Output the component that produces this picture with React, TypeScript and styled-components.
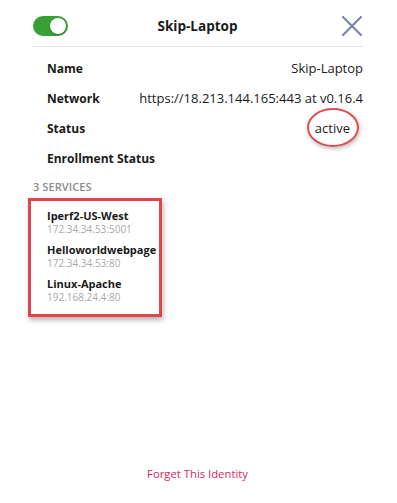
import styled, { createGlobalStyle } from 'styled-components';

const GlobalStyle = createGlobalStyle`
  html, body {
    margin: 0;
    padding: 0;
    background: #ffffff;
  }
  body {
    font-family: "Open Sans", "Noto Sans", sans-serif;
    color: #1d1d1d;
  }
`;

type Service = { name: string; address: string };

const services: Service[] = [
  { name: 'Iperf2-US-West', address: '172.34.34.53:5001' },
  { name: 'Helloworldwebpage', address: '172.34.34.53:80' },
  { name: 'Linux-Apache', address: '192.168.24.4:80' },
];

const Page = styled.div`
  width: 397px;
  height: 503px;
  box-sizing: border-box;
  padding: 0 34px 0 32px;
  display: flex;
  flex-direction: column;
`;

const Header = styled.div`
  height: 47px;
  display: flex;
  align-items: center;
  border-bottom: 1px solid #dfe4ea;
  padding-top: 6px;
  box-sizing: border-box;
`;

const HeaderSide = styled.div<{ end?: boolean }>`
  width: 38px;
  display: flex;
  justify-content: ${({ end }) => (end ? 'flex-end' : 'flex-start')};
`;

const Toggle = styled.div<{ on?: boolean }>`
  width: 35px;
  height: 20px;
  border-radius: 10px;
  background: ${({ on }) => (on ? '#36a035' : '#c8c8c8')};
  position: relative;
  margin-left: 1px;
  &::after {
    content: '';
    position: absolute;
    top: 2px;
    left: ${({ on }) => (on ? '17px' : '2px')};
    width: 16px;
    height: 16px;
    border-radius: 50%;
    background: #ffffff;
    box-shadow: 0 1px 2px rgba(0, 0, 0, 0.25);
  }
`;

const Title = styled.div`
  flex: 1;
  text-align: center;
  font-size: 13.5px;
  font-weight: 700;
  color: #1a1a1a;
`;

const CloseButton = styled.div`
  width: 22px;
  height: 22px;
  display: flex;
  align-items: center;
  justify-content: center;
`;

const Rows = styled.div`
  display: flex;
  flex-direction: column;
  padding: 6px 0 0 15px;
`;

const Row = styled.div`
  height: 30px;
  display: flex;
  align-items: center;
  justify-content: space-between;
`;

const Label = styled.div`
  font-size: 12px;
  font-weight: 700;
  color: #1a1a1a;
`;

const Value = styled.div<{ inset?: number }>`
  font-size: 13px;
  color: #1a1a1a;
  position: relative;
  margin-right: ${({ inset }) => inset ?? 0}px;
`;

const Circle = styled.div`
  position: absolute;
  left: -8px;
  top: -11px;
  width: 48px;
  height: 35px;
  border: 2.5px solid #e04c4f;
  border-radius: 50%;
  box-shadow: 1px 2px 4px rgba(0, 0, 0, 0.25);
`;

const SectionTitle = styled.div`
  margin-top: 6px;
  font-size: 11px;
  font-weight: 600;
  color: #8c8c8c;
  text-transform: uppercase;
  letter-spacing: 0.1px;
  margin-left: 1px;
`;

const ServiceBox = styled.div`
  margin-top: 4px;
  margin-left: -4px;
  width: 134px;
  box-sizing: border-box;
  border: 3px solid #e1454c;
  box-shadow: 1px 3px 5px rgba(0, 0, 0, 0.3);
  padding: 4px 0 7px 16px;
  display: flex;
  flex-direction: column;
`;

const ServiceItem = styled.div`
  height: 34px;
  display: flex;
  flex-direction: column;
  justify-content: center;
`;

const ServiceName = styled.div`
  font-size: 11px;
  font-weight: 700;
  color: #1a1a1a;
  line-height: 14px;
`;

const ServiceAddress = styled.div`
  font-size: 10px;
  color: #a9a9a9;
  line-height: 13px;
`;

const Footer = styled.div`
  margin-top: auto;
  margin-bottom: 22px;
  text-align: center;
  font-size: 11.3px;
  color: #d8295f;
`;

export default function App() {
  return (
    <>
      <GlobalStyle />
      <Page>
        <Header>
          <HeaderSide>
            <Toggle on />
          </HeaderSide>
          <Title>Skip-Laptop</Title>
          <HeaderSide end>
            <CloseButton>
              <svg width="20" height="20" viewBox="0 0 20 20">
                <path d="M1 1 L19 19 M19 1 L1 19" stroke="#7a88a6" strokeWidth="2.2" strokeLinecap="round" />
              </svg>
            </CloseButton>
          </HeaderSide>
        </Header>
        <Rows>
          <Row>
            <Label>Name</Label>
            <Value>Skip-Laptop</Value>
          </Row>
          <Row>
            <Label>Network</Label>
            <Value>https://18.213.144.165:443 at v0.16.4</Value>
          </Row>
          <Row>
            <Label>Status</Label>
            <Value inset={13}>
              active
              <Circle />
            </Value>
          </Row>
          <Row>
            <Label>Enrollment Status</Label>
            <Value />
          </Row>
        </Rows>
        <SectionTitle>3 Services</SectionTitle>
        <ServiceBox>
          {services.map((s) => (
            <ServiceItem key={s.name}>
              <ServiceName>{s.name}</ServiceName>
              <ServiceAddress>{s.address}</ServiceAddress>
            </ServiceItem>
          ))}
        </ServiceBox>
        <Footer>Forget This Identity</Footer>
      </Page>
    </>
  );
}
